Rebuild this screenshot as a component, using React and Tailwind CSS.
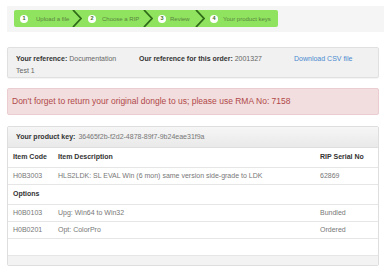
import React from "react";

function Chevron() {
  return (
    <svg width="10" height="17" viewBox="0 0 10 17" className="shrink-0">
      <polyline points="1,0 9,8.5 1,17" fill="none" stroke="#2f6a18" strokeWidth="1.8" />
    </svg>
  );
}

function Circle({ n }) {
  return (
    <div className="w-[8px] h-[8px] rounded-full bg-white shrink-0 flex items-center justify-center text-[5.5px] font-bold text-[#3f6f25] leading-none">
      {n}
    </div>
  );
}

export default function App() {
  const rows = [
    { code: "H0B0103", desc: "Upg: Win64 to Win32", serial: "Bundled" },
    { code: "H0B0201", desc: "Opt: ColorPro", serial: "Ordered" },
  ];
  return (
    <div className="w-[384px] h-[271px] bg-white overflow-hidden pt-[6px] font-['Liberation_Sans',Arial,sans-serif]">
      {/* wizard */}
      <div className="ml-[7px] h-[26px] bg-[#f5f5f5] pl-[7px] pt-[4px]">
        <div className="w-[264px] h-[17px] bg-[#8fe35f] rounded-[2px] flex items-center text-[6px] text-[#5a8440] leading-none">
          <div className="ml-[6px]"><Circle n="1" /></div>
          <div className="ml-[8px] w-[36px]">Upload a file</div>
          <Chevron />
          <div className="ml-[6px]"><Circle n="2" /></div>
          <div className="ml-[6px] w-[41px]">Choose a RIP</div>
          <Chevron />
          <div className="ml-[5px]"><Circle n="3" /></div>
          <div className="ml-[4px] w-[25px]">Review</div>
          <Chevron />
          <div className="ml-[5px]"><Circle n="4" /></div>
          <div className="ml-[5px]">Your product keys</div>
        </div>
      </div>

      {/* reference panel */}
      <div className="mt-[15px] ml-[7px] w-[372px] h-[31px] bg-[#f1f1f1] border border-[#e0e0e0] rounded-[2px] shadow-[0_1px_1px_rgba(0,0,0,0.05)] pl-[8px] pt-[5px] text-[7px] text-[#666] leading-[11px]">
        <div className="flex">
          <div className="w-[123px]"><span className="font-bold text-[#333]">Your reference:</span> Documentation</div>
          <div className="w-[155px]"><span className="font-bold text-[#333]">Our reference for this order:</span> 2001327</div>
          <div className="text-[#4a8ad0]">Download CSV file</div>
        </div>
        <div className="mt-[1px]">Test 1</div>
      </div>

      {/* alert */}
      <div className="mt-[10px] ml-[7px] w-[372px] h-[27px] bg-[#f2dede] border border-[#ebccd1] rounded-[2px] pl-[4px] flex items-center text-[8.5px] text-[#b0494a]">
        Don't forget to return your original dongle to us; please use RMA No: 7158
      </div>

      {/* product key panel */}
      <div className="mt-[11px] ml-[7px] w-[372px] border border-[#dedede] rounded-[2px] text-[7px] text-[#777] overflow-hidden">
        <div className="h-[21px] bg-gradient-to-b from-[#f6f6f6] to-[#e9e9e9] border-b border-[#dedede] pl-[8px] flex items-center">
          <span className="font-bold text-[#333]">Your product key:</span>
          <span className="ml-[3px]">36465f2b-f2d2-4878-89f7-9b24eae31f9a</span>
        </div>
        <div className="h-[20px] flex items-center font-bold text-[#333] border-b border-[#e6e6e6]">
          <div className="w-[50px] pl-[5px] shrink-0">Item Code</div>
          <div className="w-[262px] shrink-0">Item Description</div>
          <div>RIP Serial No</div>
        </div>
        <div className="h-[17px] flex items-center border-b border-[#e6e6e6]">
          <div className="w-[50px] pl-[5px] shrink-0">H0B3003</div>
          <div className="w-[262px] shrink-0">HLS2LDK: SL EVAL Win (6 mon) same version side-grade to LDK</div>
          <div>62869</div>
        </div>
        <div className="h-[20px] flex items-center font-bold text-[#333] border-b border-[#e6e6e6] pl-[5px]">
          Options
        </div>
        {rows.map((r) => (
          <div key={r.code} className="h-[17px] flex items-center border-b border-[#e6e6e6]">
            <div className="w-[50px] pl-[5px] shrink-0">{r.code}</div>
            <div className="w-[262px] shrink-0">{r.desc}</div>
            <div>{r.serial}</div>
          </div>
        ))}
        <div className="h-[17px] border-b border-[#e6e6e6]"></div>
        <div className="h-[9px] bg-[#f3f3f3]"></div>
      </div>
    </div>
  );
}
